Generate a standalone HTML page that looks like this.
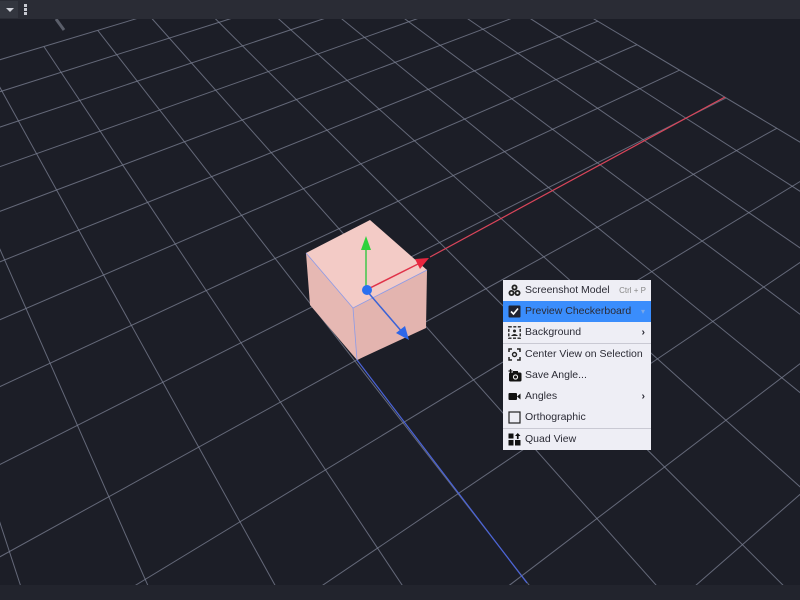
<!DOCTYPE html>
<html><head><meta charset="utf-8"><style>
html,body{margin:0;padding:0;width:800px;height:600px;overflow:hidden;background:#1c1e27;font-family:"Liberation Sans",sans-serif}
#top{position:absolute;left:0;top:0;width:800px;height:19px;background:#2a2c35}
#bot{position:absolute;left:0;top:585px;width:800px;height:15px;background:#22242d}
#menu{position:absolute;left:503px;top:280px;width:148px;height:170px;background:#eeeef5;color:#2b2b35;font-size:10.5px;overflow:hidden}
.it{position:absolute;left:0;width:148px;height:21px;line-height:21px}
.it span.t{position:absolute;left:22px}
.it svg{position:absolute;left:5px;top:4px}
.sep{position:absolute;left:0;width:148px;height:1px;background:#c9c9d3}
.hl{background:#3a8dfc}
.arr{position:absolute;right:6px;font-weight:bold}
</style></head><body>
<svg id="g" width="800" height="600" style="position:absolute;left:0;top:0"></svg>
<svg width="800" height="600" style="position:absolute;left:0;top:0">
<line x1="430" y1="257" x2="725" y2="97" stroke="#d9455a" stroke-width="1.2"/>
<line x1="357" y1="360" x2="527" y2="583" stroke="#4a63d8" stroke-width="1.2"/>
<polygon points="306,253 370,220 427,270 353,308" fill="#f3cbc6"/>
<polygon points="306,253 353,308 357,360 310,305" fill="#e6b8b3"/>
<polygon points="353,308 427,270 426,328 357,360" fill="#e3b4af"/>
<polyline points="306,253 353,308 427,270" fill="none" stroke="#8c9be8" stroke-width="0.8"/>
<line x1="353" y1="308" x2="357" y2="360" stroke="#8c9be8" stroke-width="0.8"/>
<line x1="366" y1="290" x2="366" y2="248" stroke="#3fc64a" stroke-width="1.5"/>
<polygon points="366,236 361,250 371,250" fill="#2ed23c"/>
<line x1="366" y1="290" x2="418" y2="264" stroke="#e0334a" stroke-width="1.5"/>
<polygon points="429,258 415,259 420,269" fill="#e8263e"/>
<line x1="366" y1="290" x2="403" y2="333" stroke="#3a62d6" stroke-width="1.5"/>
<polygon points="409,340 396,333 405,326" fill="#2d66e8"/>
<circle cx="367" cy="290" r="5" fill="#2a6ff0"/>
<line x1="56" y1="19" x2="64" y2="30" stroke="#5a5e6a" stroke-width="3"/>
</svg>
<div id="top">
<div style="position:absolute;left:0;top:1px;width:18px;height:17px;background:#33363f"></div>
<div style="position:absolute;left:6px;top:8px;width:0;height:0;border-left:4px solid transparent;border-right:4px solid transparent;border-top:4px solid #d0d2da"></div>
<div style="position:absolute;left:24px;top:4px;width:3px;height:3px;background:#c8cad2;box-shadow:0 4px 0 #c8cad2,0 8px 0 #c8cad2"></div>
</div>
<div id="bot"></div>
<div id="menu">
<div class="it" style="top:0"><svg width="13" height="13" viewBox="0 0 13 13"><circle cx="6.5" cy="3.5" r="3" fill="#222"/><circle cx="3.5" cy="9" r="3" fill="#222"/><circle cx="9.5" cy="9" r="3" fill="#222"/><circle cx="6.5" cy="3.5" r="1.2" fill="#eee"/><circle cx="3.5" cy="9" r="1.2" fill="#eee"/><circle cx="9.5" cy="9" r="1.2" fill="#eee"/></svg><span class="t">Screenshot Model</span><span style="position:absolute;right:5px;font-size:8px;color:#888">Ctrl + P</span></div>
<div class="it hl" style="top:21px"><svg width="13" height="13" viewBox="0 0 13 13"><rect x="0.5" y="0.5" width="12" height="12" rx="1" fill="#1f2230"/><path d="M3 6.5 L5.5 9 L10 3.5" stroke="#fff" stroke-width="1.6" fill="none"/></svg><span class="t">Preview Checkerboard</span><span style="position:absolute;right:6px;font-size:8px;color:#7aa8e8">▾</span></div>
<div class="it" style="top:42px"><svg width="13" height="13" viewBox="0 0 13 13"><rect x="0.8" y="0.8" width="11.4" height="11.4" fill="none" stroke="#222" stroke-width="1.4" stroke-dasharray="3 1.5"/><circle cx="6.5" cy="5" r="1.5" fill="#222"/><path d="M3 10 Q6.5 6 10 10Z" fill="#222"/></svg><span class="t">Background</span><span class="arr">›</span></div>
<div class="sep" style="top:63px"></div>
<div class="it" style="top:64px"><svg width="13" height="13" viewBox="0 0 13 13"><path d="M1 4V1H4M9 1H12V4M12 9V12H9M4 12H1V9" stroke="#222" stroke-width="1.5" fill="none"/><circle cx="6.5" cy="6.5" r="2" fill="none" stroke="#222" stroke-width="1.4"/></svg><span class="t">Center View on Selection</span></div>
<div class="it" style="top:85px"><svg width="14" height="13" viewBox="0 0 14 13"><rect x="1" y="3.5" width="12.5" height="9" rx="1.5" fill="#111"/><rect x="5" y="2" width="5" height="3" fill="#111"/><circle cx="7.5" cy="8" r="2.6" fill="#eee"/><circle cx="7.5" cy="8" r="1.5" fill="#111"/><path d="M2.5 0V4M0.5 2H4.5" stroke="#111" stroke-width="1.2"/></svg><span class="t">Save Angle...</span></div>
<div class="it" style="top:106px"><svg width="13" height="13" viewBox="0 0 13 13"><rect x="0.5" y="3" width="8.5" height="7" rx="1" fill="#111"/><path d="M9 6.5L12.5 3.5V9.5Z" fill="#111"/></svg><span class="t">Angles</span><span class="arr">›</span></div>
<div class="it" style="top:127px"><svg width="13" height="13" viewBox="0 0 13 13"><rect x="1" y="1" width="11" height="11" fill="none" stroke="#222" stroke-width="1.2"/></svg><span class="t">Orthographic</span></div>
<div class="sep" style="top:148px"></div>
<div class="it" style="top:149px"><svg width="13" height="13" viewBox="0 0 13 13"><rect x="0.5" y="0.5" width="5" height="5" fill="#111"/><rect x="0.5" y="7" width="5" height="5.5" fill="#111"/><rect x="7" y="7" width="5.5" height="5.5" fill="#111"/><path d="M9.75 0L12.5 3H10.6V6H8.9V3H7Z" fill="#111"/></svg><span class="t">Quad View</span></div>
</div>
<script>
(function(){
var P=[[3,0,496,214],[4,0,548,187],[5,0,597,163],[7,0,687,118],[8,0,725,98],[8,-1,680,70],[8,-2,637,45],[0,1,355,361],[0,2,403,423],[0,3,458,494],[-1,3,378,548]];
var M=[],b=[],i,j,k;
for(i=0;i<8;i++){M.push([0,0,0,0,0,0,0,0]);b.push(0);}
function add(r,v){for(var a=0;a<8;a++){for(var c=0;c<8;c++)M[a][c]+=r[a]*r[c];b[a]+=r[a]*v;}}
P.forEach(function(p){var x=p[0],y=p[1],u=p[2],v=p[3];
add([x,y,1,0,0,0,-u*x,-u*y],u);add([0,0,0,x,y,1,-v*x,-v*y],v);});
for(i=0;i<8;i++){var mx=i;for(k=i+1;k<8;k++)if(Math.abs(M[k][i])>Math.abs(M[mx][i]))mx=k;
var t=M[i];M[i]=M[mx];M[mx]=t;t=b[i];b[i]=b[mx];b[mx]=t;
for(k=0;k<8;k++)if(k!=i){var f=M[k][i]/M[i][i];for(j=i;j<8;j++)M[k][j]-=f*M[i][j];b[k]-=f*b[i];}}
var h=[];for(i=0;i<8;i++)h.push(b[i]/M[i][i]);
function pr(x,y){var w=h[6]*x+h[7]*y+1;return [(h[0]*x+h[1]*y+h[2])/w,(h[3]*x+h[4]*y+h[5])/w];}
function inv(u,v){
 var a=h[0]-u*h[6],bb=h[1]-u*h[7],c=u-h[2];
 var d=h[3]-v*h[6],e=h[4]-v*h[7],f=v-h[5];
 var det=a*e-bb*d;return [(c*e-bb*f)/det,(a*f-c*d)/det];}
var iMax=8;
var jMin=Math.round(inv(66,40)[1]);
var iMin=-40,jMax=40;
var s='',eps=0.04;
function lineSeg(fixedI,c,lo,hi){
 var w0=fixedI?(h[6]*c+1):(h[7]*c+1), d=fixedI?h[7]:h[6];
 if(Math.abs(d)>1e-12){var tz=(eps-w0)/d;if(d>0)lo=Math.max(lo,tz);else hi=Math.min(hi,tz);}
 else if(w0<eps)return;
 if(lo>=hi)return;
 var p=fixedI?pr(c,lo):pr(lo,c),q=fixedI?pr(c,hi):pr(hi,c);
 s+='<line x1="'+p[0].toFixed(1)+'" y1="'+p[1].toFixed(1)+'" x2="'+q[0].toFixed(1)+'" y2="'+q[1].toFixed(1)+'"/>';}
for(i=iMin;i<=iMax;i++)lineSeg(true,i,jMin,jMax);
for(j=jMin;j<=jMax;j++)lineSeg(false,j,iMin,iMax);
document.getElementById('g').innerHTML='<g stroke="#7c8194" stroke-opacity="0.75" stroke-width="1">'+s+'</g>';
})();
</script>
</body></html>
